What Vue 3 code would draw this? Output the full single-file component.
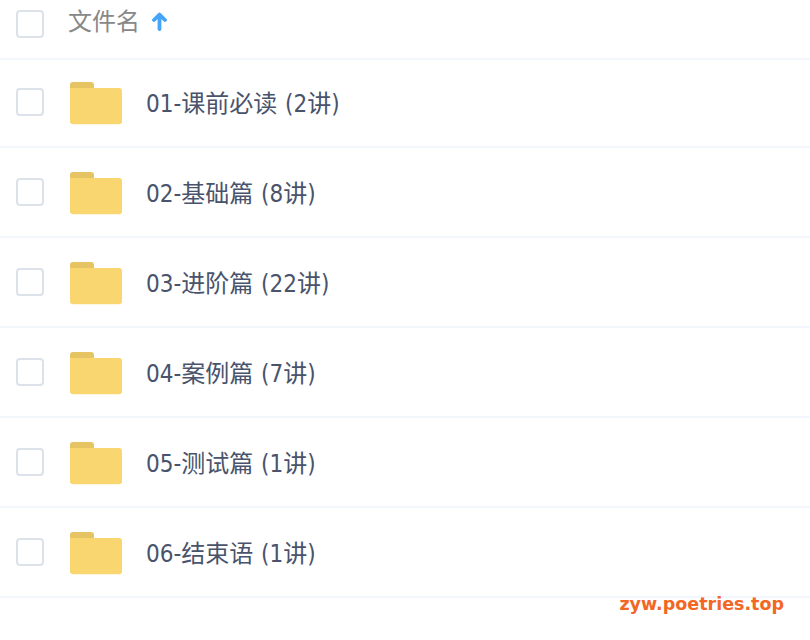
<template>
  <div class="fileList">
    <div class="listHead">
      <span class="checkBox" :class="{ checked: allChecked }" @click="toggleAll"></span>
      <span class="headName">文件名</span>
      <svg class="sortIcon" width="16" height="20" viewBox="0 0 16 20">
        <path d="M7.5 17V3M2 8L7.5 2.6L13 8" />
      </svg>
    </div>
    <ul class="rows">
      <li v-for="item in folders" :key="item.name" class="row">
        <span class="checkBox" :class="{ checked: item.checked }" @click="toggle(item)"></span>
        <svg class="folder" width="52" height="43" viewBox="0 0 52 43">
          <path class="folderTab" d="M0 16V3Q0 0 3 0H21Q24 0 24 3V16Z" />
          <path class="folderBody" d="M0 6H49Q52 6 52 9V39.2Q52 42.2 49 42.2H3Q0 42.2 0 39.2Z" />
        </svg>
        <span class="name">{{ item.name }}</span>
      </li>
    </ul>
    <div class="watermark">zyw.poetries.top</div>
  </div>
</template>

<script setup>
import { ref, computed } from 'vue';

const folders = ref([
  { name: '01-课前必读 (2讲)', checked: false },
  { name: '02-基础篇 (8讲)', checked: false },
  { name: '03-进阶篇 (22讲)', checked: false },
  { name: '04-案例篇 (7讲)', checked: false },
  { name: '05-测试篇 (1讲)', checked: false },
  { name: '06-结束语 (1讲)', checked: false },
]);

const allChecked = computed(() => folders.value.every((item) => item.checked));

const toggle = (item) => {
  item.checked = !item.checked;
};

const toggleAll = () => {
  const next = !allChecked.value;
  folders.value.forEach((item) => {
    item.checked = next;
  });
};
</script>

<style>
body {
  background: #fff;
}
</style>

<style scoped>
.fileList {
  position: relative;
  height: 640px;
  overflow: hidden;
  font-family: 'DejaVu Sans Condensed', 'Noto Sans CJK SC', sans-serif;
  font-size: 24px;
}

.listHead {
  display: flex;
  align-items: center;
  height: 60px;
  padding: 0 16px 12px;
  box-sizing: border-box;
  border-bottom: 2px solid #f2f6fd;
}

.checkBox {
  flex: none;
  width: 28px;
  height: 28px;
  box-sizing: border-box;
  border: 2px solid #dbe2ea;
  border-radius: 4px;
  background: #fff;
}
.listHead .checkBox {
  margin-top: 2px;
}
.checked {
  background: #46a5fb;
}

.headName {
  margin: -2px 0 0 24px;
  line-height: 32px;
  color: #888;
}

.sortIcon {
  margin: -3px 0 0 12px;
}
.sortIcon path {
  fill: none;
  stroke: #46a5fb;
  stroke-width: 3.8;
  stroke-linecap: round;
  stroke-linejoin: round;
}

/* 第一行與表頭共用邊線 */
.rows {
  margin: -2px 0 0;
  padding: 0;
  list-style: none;
}

.row {
  display: flex;
  align-items: center;
  height: 90px;
  padding: 0 16px;
  box-sizing: border-box;
  border-bottom: 2px solid #f2f6fd;
}

.folder {
  margin: 2px 24px 0 26px;
}
.folderTab {
  fill: #e6c363;
}
.folderBody {
  fill: #f9d66f;
}

.name {
  margin-top: 4px;
  line-height: 32px;
  color: #49536c;
  white-space: pre;
  word-spacing: 1px;
}

.watermark {
  position: absolute;
  right: 26px;
  bottom: 24px;
  font-family: 'DejaVu Sans', sans-serif;
  font-size: 17.5px;
  font-weight: bold;
  line-height: 24px;
  color: #f26724;
}
</style>
